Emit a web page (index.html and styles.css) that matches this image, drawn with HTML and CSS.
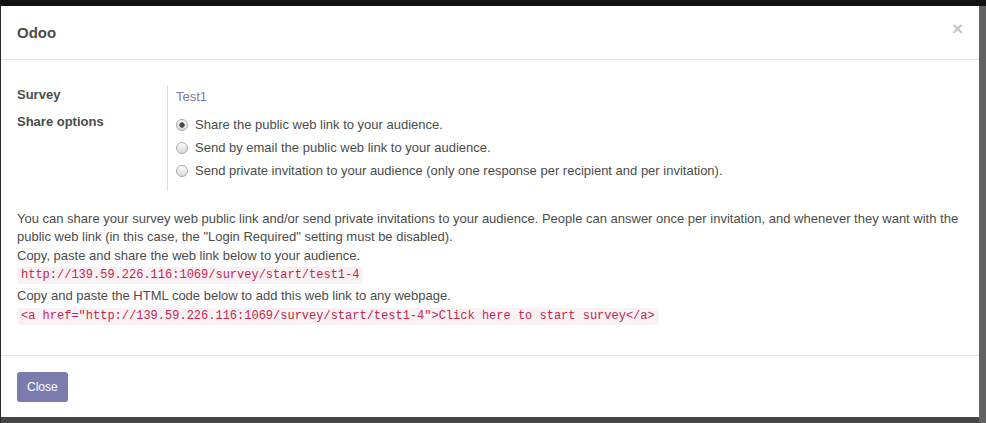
FILE: index.html
```
<!doctype html>
<html>
    <head>
        <meta charset="utf-8">
        <title>Odoo</title>
        <link rel="stylesheet" href="styles.css">
    </head>
    <body>
        <div class="modal">
            <div class="modal-header">
                <h4 class="modal-title">Odoo</h4>
                <button class="close" type="button">&times;</button>
            </div>
            <div class="modal-body">
                <div class="form-group">
                    <div class="labels">
                        <div class="label survey-label">Survey</div>
                        <div class="label">Share options</div>
                    </div>
                    <div class="values">
                        <a class="survey-link" href="#">Test1</a>
                        <div class="radios">
                            <label class="radio"><input type="radio" name="share" checked> Share the public web link to your audience.</label>
                            <label class="radio"><input type="radio" name="share"> Send by email the public web link to your audience.</label>
                            <label class="radio"><input type="radio" name="share"> Send private invitation to your audience (only one response per recipient and per invitation).</label>
                        </div>
                    </div>
                </div>
                <div class="help">
                    <div>You can share your survey web public link and/or send private invitations to your audience. People can answer once per invitation, and whenever they want with the public web link (in this case, the "Login Required" setting must be disabled).</div>
                    <div class="share-url">Copy, paste and share the web link below to your audience.<br>
                        <code>http://139.59.226.116:1069/survey/start/test1-4</code>
                    </div>
                    <div class="share-html">Copy and paste the HTML code below to add this web link to any webpage.<br>
                        <code>&lt;a href="http://139.59.226.116:1069/survey/start/test1-4"&gt;Click here to start survey&lt;/a&gt;</code>
                    </div>
                </div>
            </div>
            <div class="modal-footer">
                <button class="btn btn-primary" type="button">Close</button>
            </div>
        </div>
    </body>
</html>
```
FILE: styles.css
```
* {
    box-sizing: border-box;
}
html, body {
    margin: 0;
    padding: 0;
    height: 100%;
}
body {
    background: linear-gradient(to bottom, #111 6px, transparent 6px), linear-gradient(to right, #2a2a2a 1px, #454545 1px, #454545 979px, #626262 979px);
    font-family: "Liberation Sans", Arial, sans-serif;
    font-size: 13px;
    line-height: 1.42857;
    color: #4c4c4c;
    padding-top: 6px;
    padding-left: 1px;
}
.modal {
    width: 978px;
    height: 411px;
    background: #fff;
    display: flex;
    flex-direction: column;
}
.modal-header {
    height: 54px;
    padding: 0 16px;
    border-bottom: 1px solid #e5e5e5;
    display: flex;
    align-items: center;
    justify-content: space-between;
}
.modal-title {
    margin: 0;
    font-size: 15px;
    font-weight: bold;
    color: #4c4c4c;
    padding-top: 1px;
}
.close {
    border: 0;
    background: none;
    padding: 0;
    margin: -8px 0 0 0;
    font-family: "Liberation Sans", Arial, sans-serif;
    font-size: 19px;
    font-weight: bold;
    line-height: 1;
    color: #c6c6c6;
    cursor: pointer;
}
.modal-body {
    flex: 1;
    padding: 26px 16px 0;
}
.form-group {
    display: flex;
}
.labels {
    width: 150px;
    padding-bottom: 8px;
}
.label {
    font-weight: bold;
}
.survey-label {
    margin-bottom: 8px;
}
.values {
    border-left: 1px solid #ddd;
    padding-left: 8px;
    padding-bottom: 8px;
}
.survey-link {
    display: block;
    color: #7c7bad;
    text-decoration: none;
    margin-top: 2px;
    margin-bottom: 7px;
}
.radio {
    display: flex;
    align-items: center;
    height: 23px;
}
.radio input {
    appearance: none;
    -webkit-appearance: none;
    width: 12px;
    height: 12px;
    margin: 0 7px 0 0;
    border: 1px solid #a9a9a9;
    border-radius: 50%;
    background: linear-gradient(#fbfbfb, #dadada);
}
.radio input:checked {
    background: radial-gradient(circle, #4d4d4d 0, #4d4d4d 2.4px, transparent 3px), linear-gradient(#fbfbfb, #dadada);
}
.help {
    margin-top: 19px;
}
code {
    display: inline-block;
    font-family: "Liberation Mono", "Courier New", monospace;
    font-size: 12px;
    line-height: 13px;
    padding: 2px 4px;
    margin: 2px 0 3px;
    color: #c7254e;
    background: #f9f2f4;
    border-radius: 4px;
}
.modal-footer {
    border-top: 1px solid #e5e5e5;
    padding: 16px 16px 15px;
}
.btn {
    font-family: "Liberation Sans", Arial, sans-serif;
    font-size: 12px;
    line-height: 18px;
    padding: 6px 10px;
    border: 0;
    border-radius: 3px;
    cursor: pointer;
}
.btn-primary {
    background: #7c7bad;
    color: #fff;
}
```
